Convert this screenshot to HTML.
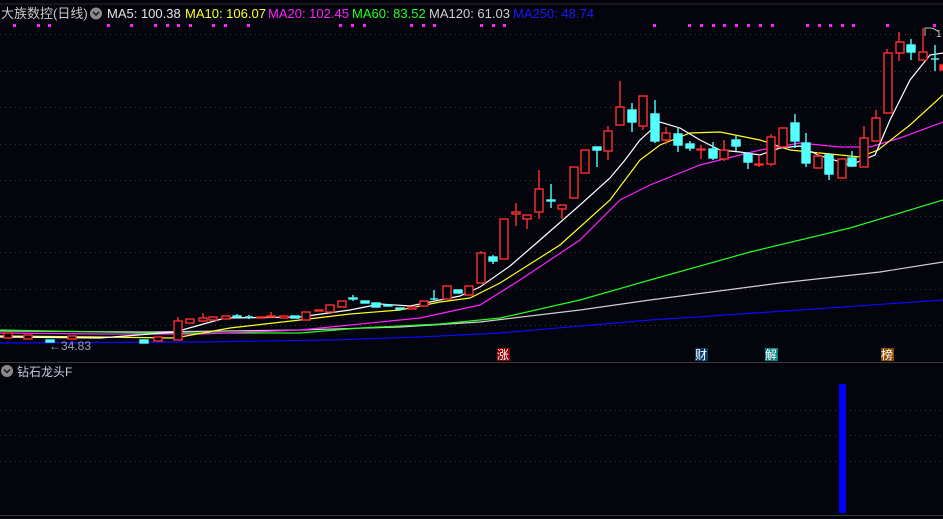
<!DOCTYPE html>
<html><head><meta charset="utf-8"><style>
html,body{margin:0;padding:0;background:#04040c;width:943px;height:519px;overflow:hidden}
svg{display:block}
text{font-family:"Liberation Sans","Noto Sans CJK SC",sans-serif}
</style></head><body>
<svg width="943" height="519" viewBox="0 0 943 519" xmlns="http://www.w3.org/2000/svg">
<rect width="943" height="519" fill="#04040c"/>
<line x1="0" y1="4" x2="943" y2="4" stroke="#2a2a2a"/>
<g stroke="#3c3c3c" stroke-dasharray="1 4">
<line x1="0" y1="34.5" x2="943" y2="34.5"/><line x1="0" y1="71.5" x2="943" y2="71.5"/>
<line x1="0" y1="107.5" x2="943" y2="107.5"/><line x1="0" y1="144.5" x2="943" y2="144.5"/>
<line x1="0" y1="180.5" x2="943" y2="180.5"/><line x1="0" y1="216.5" x2="943" y2="216.5"/>
<line x1="0" y1="252.5" x2="943" y2="252.5"/><line x1="0" y1="289.5" x2="943" y2="289.5"/>
<line x1="0" y1="325.5" x2="943" y2="325.5"/>
<line x1="0" y1="410.5" x2="943" y2="410.5"/><line x1="0" y1="435.5" x2="943" y2="435.5"/>
<line x1="0" y1="461.5" x2="943" y2="461.5"/>
</g>
<line x1="0" y1="362.5" x2="943" y2="362.5" stroke="#3a3a3a"/>
<line x1="0" y1="515.5" x2="943" y2="515.5" stroke="#3a3a3a"/>

<!-- header -->
<text x="1" y="18" font-size="13" fill="#c8c8c8">大族数控(日线)</text>
<circle cx="96" cy="13.5" r="6" fill="#8a8a8a"/>
<path d="M93 12 L96 15 L99 12" stroke="#222" stroke-width="1.6" fill="none"/>
<text x="107" y="18" font-size="13" fill="#e6e6e6">MA5: 100.38</text>
<text x="185" y="18" font-size="13" fill="#ffff2a">MA10: 106.07</text>
<text x="268" y="18" font-size="13" fill="#ff22ff">MA20: 102.45</text>
<text x="352" y="18" font-size="13" fill="#22ff22">MA60: 83.52</text>
<text x="429" y="18" font-size="13" fill="#cfcfcf">MA120: 61.03</text>
<text x="513" y="18" font-size="13" fill="#1a1aff">MA250: 48.74</text>
<g fill="#ff22ff">
<rect x="13" y="24" width="3" height="3"/><rect x="37" y="24" width="3" height="3"/><rect x="48" y="24" width="3" height="3"/>
<rect x="107" y="24" width="3" height="3"/><rect x="130" y="24" width="3" height="3"/><rect x="154" y="24" width="3" height="3"/>
<rect x="166" y="24" width="3" height="3"/><rect x="177" y="24" width="3" height="3"/><rect x="189" y="24" width="3" height="3"/>
<rect x="212" y="24" width="3" height="3"/><rect x="224" y="24" width="3" height="3"/><rect x="247" y="24" width="3" height="3"/>
<rect x="339" y="24" width="3" height="3"/><rect x="351" y="24" width="3" height="3"/><rect x="363" y="24" width="3" height="3"/>
<rect x="410" y="24" width="3" height="3"/><rect x="422" y="24" width="3" height="3"/><rect x="433" y="24" width="3" height="3"/>
<rect x="480" y="24" width="3" height="3"/><rect x="492" y="24" width="3" height="3"/><rect x="503" y="24" width="3" height="3"/>
<rect x="653" y="24" width="3" height="3"/><rect x="688" y="24" width="3" height="3"/><rect x="700" y="24" width="3" height="3"/>
<rect x="712" y="24" width="3" height="3"/><rect x="723" y="24" width="3" height="3"/><rect x="735" y="24" width="3" height="3"/>
<rect x="747" y="24" width="3" height="3"/><rect x="759" y="24" width="3" height="3"/><rect x="771" y="24" width="3" height="3"/>
<rect x="806" y="24" width="3" height="3"/><rect x="818" y="24" width="3" height="3"/><rect x="829" y="24" width="3" height="3"/>
<rect x="841" y="24" width="3" height="3"/><rect x="852" y="24" width="3" height="3"/><rect x="886" y="24" width="3" height="3"/>
<rect x="933" y="24" width="3" height="3"/>
</g>

<!-- MA lines -->
<g fill="none" stroke-width="1.2">
<polyline stroke="#0a0aff" points="0,343 200,342 330,340 420,337 500,333 650,320 800,310 943,300"/>
<polyline stroke="#cfcfcf" points="0,331 150,332 300,330 400,327 480,322 580,310 650,300 780,283 880,272 943,262"/>
<polyline stroke="#22ff22" points="0,330 150,333 300,333 360,328 440,324 500,318 580,300 650,280 750,252 850,228 943,200"/>
<polyline stroke="#ff22ff" points="0,333 100,334 200,334 300,330 350,325 420,318 480,305 520,280 580,240 620,200 650,185 700,165 760,150 800,143 840,147 870,147 900,138 943,122"/>
<polyline stroke="#ffff22" points="0,336 100,337 175,338 230,328 300,320 350,314 400,310 440,302 470,298 500,283 560,245 610,200 640,160 660,145 690,133 720,132 760,140 790,150 820,153 860,157 878,150 910,125 943,95"/>
<polyline stroke="#ffffff" points="0,337 100,338 175,332 225,318 300,317 350,310 380,304 410,306 440,300 460,296 480,287 510,266 540,240 580,205 610,178 625,160 640,140 660,122 680,128 700,140 720,150 740,152 760,155 780,148 800,146 818,155 850,165 875,155 890,120 910,80 930,55 943,53"/>
</g>

<!-- candles -->
<g stroke-width="1.4">
<g stroke="#ff3030" fill="#04040c">
<rect x="4" y="333" width="8" height="5"/><rect x="24" y="335" width="8" height="4"/><rect x="68" y="336" width="8" height="3"/>
<rect x="154" y="337" width="8" height="4"/>
<line x1="178" y1="317" x2="178" y2="321"/><rect x="174" y="321" width="8" height="19"/>
<rect x="186" y="319" width="8" height="4"/>
<line x1="203" y1="313" x2="203" y2="318"/><rect x="199" y="318" width="8" height="3"/>
<rect x="209" y="317" width="8" height="3"/><rect x="222" y="316" width="8" height="3"/>
<rect x="257" y="317" width="8" height="1"/><line x1="271" y1="312" x2="271" y2="316"/><rect x="267" y="316" width="8" height="1"/>
<rect x="280" y="316" width="8" height="2"/><rect x="302" y="312" width="8" height="8"/><rect x="315" y="310" width="8" height="1"/>
<rect x="326" y="305" width="8" height="7"/><rect x="338" y="301" width="8" height="6"/>
<rect x="408" y="307" width="8" height="2"/><rect x="420" y="301" width="8" height="5"/><rect x="443" y="286" width="8" height="13"/>
<rect x="465" y="286" width="8" height="9"/>
<line x1="481" y1="251" x2="481" y2="253"/><rect x="477" y="253" width="8" height="30"/>
<rect x="500" y="219" width="8" height="40"/>
<line x1="516" y1="203" x2="516" y2="226"/><rect x="512" y="212" width="8" height="2"/>
<line x1="527" y1="219" x2="527" y2="229"/><rect x="523" y="215" width="8" height="4"/>
<line x1="539" y1="170" x2="539" y2="219"/><rect x="535" y="189" width="8" height="23"/>
<line x1="562" y1="209" x2="562" y2="219"/><rect x="558" y="205" width="8" height="4"/>
<rect x="570" y="167" width="8" height="31"/>
<rect x="581" y="150" width="8" height="23"/>
<line x1="608" y1="126" x2="608" y2="160"/><rect x="604" y="131" width="8" height="20"/>
<line x1="620" y1="81" x2="620" y2="107"/><rect x="616" y="107" width="8" height="18"/>
<line x1="643" y1="126" x2="643" y2="130"/><rect x="639" y="96" width="8" height="30"/>
<line x1="666" y1="127" x2="666" y2="144"/><rect x="662" y="133" width="8" height="7"/>
<line x1="701" y1="145" x2="701" y2="159"/><rect x="697" y="149" width="8" height="1"/>
<line x1="724" y1="140" x2="724" y2="161"/><rect x="720" y="150" width="8" height="9"/>
<line x1="759" y1="155" x2="759" y2="167"/><rect x="755" y="164" width="8" height="1"/>
<line x1="771" y1="134" x2="771" y2="166"/><rect x="767" y="137" width="8" height="27"/>
<rect x="779" y="128" width="8" height="19"/>
<line x1="818" y1="152" x2="818" y2="156"/><rect x="814" y="156" width="8" height="12"/>
<rect x="838" y="159" width="8" height="19"/>
<line x1="864" y1="126" x2="864" y2="138"/><rect x="860" y="138" width="8" height="29"/>
<line x1="876" y1="110" x2="876" y2="118"/><rect x="872" y="118" width="8" height="23"/>
<line x1="887" y1="49" x2="887" y2="53"/><rect x="884" y="53" width="8" height="60"/>
<line x1="899" y1="32" x2="899" y2="61"/><rect x="896" y="42" width="8" height="11"/>
<line x1="923" y1="28" x2="923" y2="52"/><rect x="919" y="52" width="8" height="8"/>
<rect x="940" y="65" width="4" height="5" fill="#ff3030"/>
</g>
<g stroke="#54ffff" fill="#54ffff">
<rect x="46" y="340" width="8" height="2"/><rect x="140" y="340" width="8" height="3"/>
<line x1="237" y1="314" x2="237" y2="317"/><rect x="233" y="316" width="8" height="1"/>
<line x1="249" y1="315" x2="249" y2="319"/><line x1="245" y1="317" x2="253" y2="317"/>
<rect x="291" y="316" width="8" height="2"/>
<line x1="353" y1="295" x2="353" y2="301"/><rect x="349" y="298" width="8" height="1"/>
<rect x="361" y="301" width="8" height="2"/><rect x="372" y="303" width="8" height="4"/>
<rect x="384" y="305" width="8" height="1"/><rect x="396" y="308" width="8" height="1"/>
<line x1="434" y1="290" x2="434" y2="300"/><line x1="430" y1="299" x2="438" y2="299"/>
<rect x="454" y="290" width="8" height="3"/>
<line x1="493" y1="255" x2="493" y2="264"/><rect x="489" y="257" width="8" height="4"/>
<line x1="551" y1="184" x2="551" y2="208"/><rect x="547" y="200" width="8" height="1"/>
<line x1="597" y1="147" x2="597" y2="167"/><rect x="593" y="147" width="8" height="3"/>
<line x1="632" y1="103" x2="632" y2="132"/><rect x="628" y="110" width="8" height="12"/>
<line x1="655" y1="100" x2="655" y2="143"/><rect x="651" y="114" width="8" height="27"/>
<line x1="678" y1="127" x2="678" y2="152"/><rect x="674" y="134" width="8" height="11"/>
<line x1="690" y1="141" x2="690" y2="151"/><rect x="686" y="144" width="8" height="4"/>
<line x1="713" y1="142" x2="713" y2="160"/><rect x="709" y="149" width="8" height="9"/>
<line x1="736" y1="135" x2="736" y2="151"/><rect x="732" y="140" width="8" height="6"/>
<line x1="748" y1="152" x2="748" y2="169"/><rect x="744" y="154" width="8" height="8"/>
<line x1="795" y1="114" x2="795" y2="148"/><rect x="791" y="123" width="8" height="18"/>
<line x1="806" y1="133" x2="806" y2="167"/><rect x="802" y="143" width="8" height="20"/>
<line x1="829" y1="153" x2="829" y2="180"/><rect x="825" y="155" width="8" height="19"/>
<line x1="852" y1="151" x2="852" y2="167"/><rect x="848" y="158" width="8" height="8"/>
<line x1="911" y1="39" x2="911" y2="60"/><rect x="907" y="45" width="8" height="7"/>
<line x1="935" y1="45" x2="935" y2="71"/><line x1="931" y1="59" x2="939" y2="59"/>
</g>
</g>
<path d="M925 36 L925 28 L932 28 L938 31" stroke="#bbb" fill="none"/>
<text x="936" y="37" font-size="10" fill="#ccc">1</text>

<!-- low label -->
<text x="49" y="350" font-size="12" fill="#9aa0b0">←34.83</text>

<!-- tags -->
<rect x="497" y="348" width="13" height="13" fill="#8b0000"/><text x="497" y="359" font-size="12" fill="#fff">涨</text>
<rect x="695" y="348" width="13" height="13" fill="#0a3a6a"/><text x="695" y="359" font-size="12" fill="#fff">财</text>
<rect x="765" y="348" width="13" height="13" fill="#0a8080"/><text x="765" y="359" font-size="12" fill="#fff">解</text>
<rect x="881" y="348" width="13" height="13" fill="#8a4a00"/><text x="881" y="359" font-size="12" fill="#fff">榜</text>

<!-- lower panel -->
<circle cx="7" cy="371" r="6" fill="#8a8a8a"/>
<path d="M4 369.5 L7 372.5 L10 369.5" stroke="#222" stroke-width="1.6" fill="none"/>
<text x="17" y="376" font-size="12" fill="#c8d0e0">钻石龙头F</text>
<rect x="839" y="384" width="7" height="129" fill="#0000ff"/>
</svg>
</body></html>
